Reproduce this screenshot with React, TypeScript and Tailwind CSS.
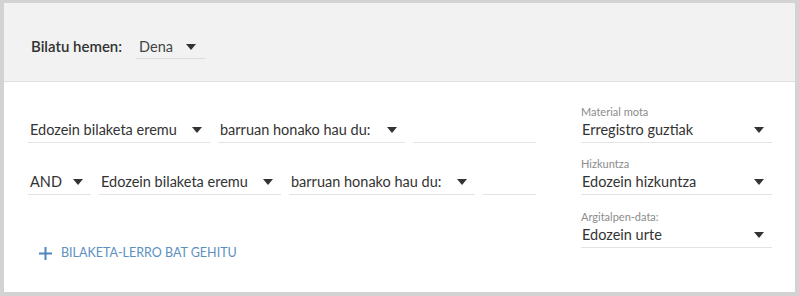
import type { ReactNode } from "react"

function Caret() {
  return (
    <svg width="10" height="6" viewBox="0 0 10 6" className="shrink-0">
      <polygon points="0,0 10,0 5,6" fill="#333333" />
    </svg>
  )
}

function Select({ value, width }: { value: string; width: string }) {
  return (
    <div className={`${width} h-[25px] flex items-center justify-between pl-[2px] pr-[8px] border-b border-[#e3e3e3] shrink-0`}>
      <span className="text-[14.5px] text-[#333333] whitespace-nowrap">{value}</span>
      <Caret />
    </div>
  )
}

function Input({ width }: { width: string }) {
  return <div className={`${width} h-[25px] border-b border-[#e3e3e3] shrink-0`} />
}

function Field({ label, value, className }: { label: string; value: string; className?: string }): ReactNode {
  return (
    <div className={className}>
      <div className="text-[11px] leading-[12px] text-[#8c8c8c]">{label}</div>
      <div className="h-[25px] flex items-center justify-between pl-[1px] pr-[8px] border-b border-[#e3e3e3]">
        <span className="text-[14.5px] text-[#333333]">{value}</span>
        <Caret />
      </div>
    </div>
  )
}

export default function App() {
  return (
    <div className="w-[799px] h-[296px] bg-[#d3d3d3] pt-[3px] pl-[4px] pr-[4px] pb-[4px] font-['Lato',sans-serif]">
      <div className="h-full bg-white flex flex-col">
        {/* cabecera gris */}
        <div className="h-[79px] bg-[#f2f2f2] border-b border-[#e0e0e0] flex items-end pb-[22px] px-[27px] shrink-0">
          <span className="text-[15px] font-semibold text-[#333333] mr-[14px] pb-[2px]">Bilatu hemen:</span>
          <div className="w-[69px] h-[24px] flex items-center justify-between pl-[3px] pr-[9px] border-b border-[#dcdcdc]">
            <span className="text-[14.5px] text-[#444444]">Dena</span>
            <Caret />
          </div>
        </div>

        <div className="flex pt-[24px] pl-[24px] pr-[23px]">
          <div className="w-[508px] flex flex-col">
            <div className="flex gap-[8px] mt-[12px]">
              <Select value="Edozein bilaketa eremu" width="w-[182px]" />
              <Select value="barruan honako hau du:" width="w-[187px]" />
              <Input width="w-[123px]" />
            </div>
            <div className="flex gap-[8px] mt-[27px]">
              <Select value="AND" width="w-[63px]" />
              <Select value="Edozein bilaketa eremu" width="w-[182px]" />
              <Select value="barruan honako hau du:" width="w-[186px]" />
              <Input width="w-[53px]" />
            </div>
            <button className="flex items-center gap-[9px] mt-[49px] ml-[11px] text-[#5b8fc2]">
              <svg width="13" height="13" viewBox="0 0 13 13">
                <path d="M6.5 0v13M0 6.5h13" stroke="#4f86bd" strokeWidth="2" />
              </svg>
              <span className="text-[12.5px] uppercase">Bilaketa-lerro bat gehitu</span>
            </button>
          </div>

          <div className="w-[191px] ml-[45px] flex flex-col">
            <Field label="Material mota" value="Erregistro guztiak" />
            <Field label="Hizkuntza" value="Edozein hizkuntza" className="mt-[15px]" />
            <Field label="Argitalpen-data:" value="Edozein urte" className="mt-[16px]" />
          </div>
        </div>
      </div>
    </div>
  )
}
